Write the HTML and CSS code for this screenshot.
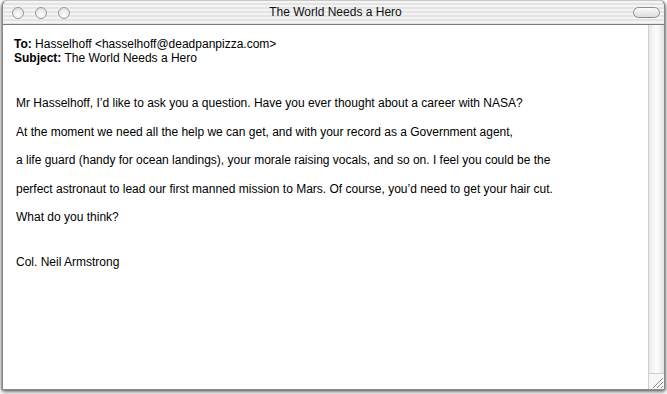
FILE: index.html
```html
<!DOCTYPE html>
<html>
<head>
<meta charset="utf-8">
<link rel="stylesheet" href="styles.css">
</head>
<body>
<div class="window">
  <div class="titlebar">
    <div class="lights">
      <span class="light"></span><span class="light"></span><span class="light"></span>
    </div>
    <div class="title">The World Needs a Hero</div>
    <span class="pill"></span>
  </div>
  <div class="main">
    <div class="content">
      <div class="headers">
        <div><b>To:</b> Hasselhoff &lt;hasselhoff@deadpanpizza.com&gt;</div>
        <div><b>Subject:</b> The World Needs a Hero</div>
      </div>
      <div class="body">
        <p>Mr Hasselhoff, I’d like to ask you a question. Have you ever thought about a career with NASA?</p>
        <p>At the moment we need all the help we can get, and with your record as a Government agent,</p>
        <p>a life guard (handy for ocean landings), your morale raising vocals, and so on. I feel you could be the</p>
        <p>perfect astronaut to lead our first manned mission to Mars. Of course, you’d need to get your hair cut.</p>
        <p>What do you think?</p>
        <p class="sig">Col. Neil Armstrong</p>
      </div>
    </div>
    <div class="scroll">
      <div class="track"></div>
      <div class="grow">
        <svg width="15" height="15" viewBox="0 0 15 15">
          <g stroke="#888" stroke-width="1">
            <line x1="4" y1="14" x2="14" y2="4"/>
            <line x1="8" y1="14" x2="14" y2="8"/>
            <line x1="12" y1="14" x2="14" y2="12"/>
          </g>
          <g stroke="#fff" stroke-width="1">
            <line x1="5" y1="14" x2="14" y2="5"/>
            <line x1="9" y1="14" x2="14" y2="9"/>
          </g>
        </svg>
      </div>
    </div>
  </div>
</div>
</body>
</html>
```
FILE: styles.css
```css
html, body {
  margin: 0;
  padding: 0;
  background: #fff;
}
body {
  width: 667px;
  height: 394px;
  overflow: hidden;
  font-family: "Liberation Sans", Arial, sans-serif;
  color: #000;
}
.window {
  margin-left: 2px;
  width: 661px;
  height: 388px;
  border: 1px solid #8a8a8a;
  border-top-color: #c8c8c8;
  border-radius: 6px 6px 0 0;
  box-shadow: 0 2px 4px rgba(0,0,0,0.55), -1px 0 2px rgba(0,0,0,0.25), 1px 0 2px rgba(0,0,0,0.25);
  display: flex;
  flex-direction: column;
  overflow: hidden;
  background: #fff;
}
.titlebar {
  height: 23px;
  flex: none;
  position: relative;
  display: flex;
  align-items: center;
  border-bottom: 1px solid #7c7c7c;
  background:
    repeating-linear-gradient(to bottom, #f4f4f4 0px, #f4f4f4 2px, #e4e4e4 2px, #e4e4e4 4px);
}
.lights {
  display: flex;
  gap: 11px;
  padding-left: 9px;
  padding-top: 1px;
}
.light {
  width: 12px;
  height: 12px;
  border-radius: 50%;
  border: 1px solid #9a9a9a;
  background: radial-gradient(circle at 50% 70%, #fdfdfd 0%, #ececec 55%, #d4d4d4 100%);
  box-sizing: border-box;
}
.title {
  position: absolute;
  left: 0;
  right: 0;
  top: 4px;
  text-align: center;
  font-size: 12px;
  line-height: 14px;
  padding-left: 4px;
  color: #111;
}
.pill {
  position: absolute;
  right: 4px;
  top: 6px;
  width: 27px;
  height: 11px;
  border-radius: 6px;
  border: 1px solid #8d8d8d;
  background: linear-gradient(to bottom, #fafafa, #dcdcdc);
  box-sizing: border-box;
}
.main {
  flex: 1;
  display: flex;
  min-height: 0;
}
.content {
  flex: 1;
  padding: 12px 0 0 11px;
  font-size: 12px;
}
.headers {
  line-height: 14px;
}
.headers b {
  font-weight: bold;
}
.body {
  padding-top: 24px;
  padding-left: 2px;
}
.body p {
  margin: 0;
  line-height: 28.5px;
}
.body .sig {
  margin-top: 16px;
}
.scroll {
  width: 15px;
  flex: none;
  display: flex;
  flex-direction: column;
  border-left: 1px solid #d0d0d0;
}
.track {
  flex: 1;
  background: linear-gradient(to right, #e8e8e8 0%, #f6f6f6 30%, #fcfcfc 55%, #e2e2e2 100%);
}
.grow {
  height: 15px;
  border-top: 1px solid #cfcfcf;
  background: #f6f6f6;
}
.grow svg {
  display: block;
}
```
